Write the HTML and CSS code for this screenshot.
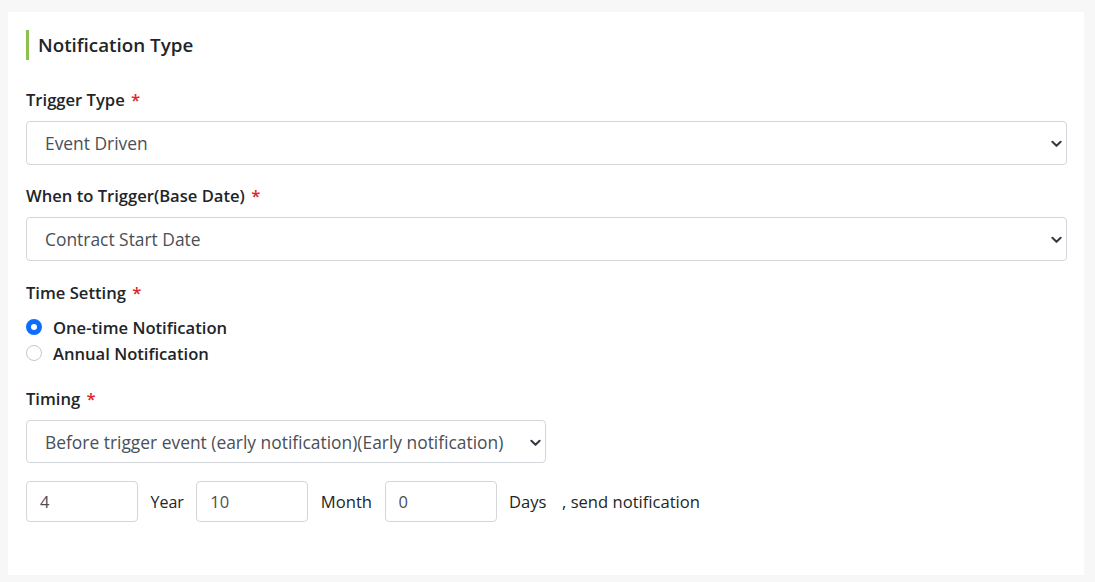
FILE: index.html
```html
<!DOCTYPE html>
<html lang="en">
<head>
<meta charset="utf-8">
<title>Notification Type</title>
<link rel="stylesheet" href="styles.css">
</head>
<body>
<div class="card">
  <h2 class="section-title">Notification Type</h2>

  <div class="field f1">
    <label class="field-label">Trigger Type <span class="req">*</span></label>
    <div class="select-wrap">
      <select class="form-select"><option>Event Driven</option></select>
      <svg class="chevron" viewBox="0 0 12 8"><path d="M1.5 1.5 L6 6 L10.5 1.5" fill="none" stroke="#343a40" stroke-width="2.2" stroke-linecap="round" stroke-linejoin="round"/></svg>
    </div>
  </div>

  <div class="field f2">
    <label class="field-label">When to Trigger(Base Date) <span class="req">*</span></label>
    <div class="select-wrap">
      <select class="form-select"><option>Contract Start Date</option></select>
      <svg class="chevron" viewBox="0 0 12 8"><path d="M1.5 1.5 L6 6 L10.5 1.5" fill="none" stroke="#343a40" stroke-width="2.2" stroke-linecap="round" stroke-linejoin="round"/></svg>
    </div>
  </div>

  <div class="field f3">
    <label class="field-label">Time Setting <span class="req">*</span></label>
    <div class="radios">
      <label class="radio"><input type="radio" name="ts" checked><span>One-time Notification</span></label>
      <label class="radio"><input type="radio" name="ts"><span>Annual Notification</span></label>
    </div>
  </div>

  <div class="field f4">
    <label class="field-label">Timing <span class="req">*</span></label>
    <div class="select-wrap narrow">
      <select class="form-select"><option>Before trigger event (early notification)(Early notification)</option></select>
      <svg class="chevron" viewBox="0 0 12 8"><path d="M1.5 1.5 L6 6 L10.5 1.5" fill="none" stroke="#343a40" stroke-width="2.2" stroke-linecap="round" stroke-linejoin="round"/></svg>
    </div>
  </div>

  <div class="timing-row">
    <input class="num-input" type="text" value="4">
    <span class="unit unit-year">Year</span>
    <input class="num-input" type="text" value="10">
    <span class="unit">Month</span>
    <input class="num-input" type="text" value="0">
    <span class="unit">Days</span>
    <span class="unit suffix">, send notification</span>
  </div>
</div>
</body>
</html>
```
FILE: styles.css
```css
* { box-sizing: border-box; }

html, body {
  margin: 0;
  background: #f7f7f7;
}

body {
  padding: 12px 11px 8px 8px;
  font-family: "Open Sans", "Noto Sans", sans-serif;
  color: #212529;
}

.card {
  background: #ffffff;
  padding: 18px 17px 53px 18px;
  min-height: 562px;
}

.section-title {
  margin: 0;
  border-left: 3px solid #8cc152;
  padding-left: 9px;
  height: 30px;
  line-height: 30px;
  font-size: 18.8px;
  font-weight: 600;
  color: #212529;
}

.field.f1 { margin-top: 28px; }
.field.f2 { margin-top: 19px; }
.field.f3 { margin-top: 20px; }
.field.f4 { margin-top: 21px; }

.field-label {
  display: block;
  font-size: 16.6px;
  font-weight: 600;
  line-height: 24px;
  margin-bottom: 9px;
}

.req { color: #e02424; font-weight: 600; margin-left: 2px; }

.select-wrap { position: relative; }
.select-wrap.narrow { width: 520px; }

.form-select {
  display: block;
  width: 100%;
  height: 44px;
  appearance: none;
  -webkit-appearance: none;
  background: #fff;
  border: 1px solid #d3d6da;
  border-radius: 4px;
  padding: 0 30px 0 18px;
  font-family: inherit;
  font-size: 17.4px;
  color: #495057;
}

.select-wrap.narrow .form-select { height: 43px; }

.chevron {
  position: absolute;
  right: 5px;
  top: 50%;
  width: 11px;
  height: 8px;
  margin-top: -3px;
  pointer-events: none;
}

.radios { display: flex; flex-direction: column; }

.radio {
  display: flex;
  align-items: center;
  height: 26px;
  font-size: 16.6px;
  font-weight: 600;
}

.radio input {
  appearance: none;
  -webkit-appearance: none;
  width: 16px;
  height: 16px;
  margin: 0 11px 0 0;
  border: 1px solid #c4c7cb;
  border-radius: 50%;
  background: #fff;
}

.radio input:checked {
  border: 5px solid #0d6efd;
  background: #fff;
}

.timing-row {
  display: flex;
  align-items: center;
  gap: 12.5px;
  margin-top: 18px;
}

.num-input {
  width: 112px;
  height: 41px;
  border: 1px solid #d3d6da;
  border-radius: 4px;
  padding: 0 13px;
  font-family: inherit;
  font-size: 16.5px;
  color: #495057;
  background: #fff;
}

.unit {
  font-size: 16.6px;
  color: #212529;
}

.unit-year { font-size: 16px; }

.unit.suffix { margin-left: 3px; }
```
